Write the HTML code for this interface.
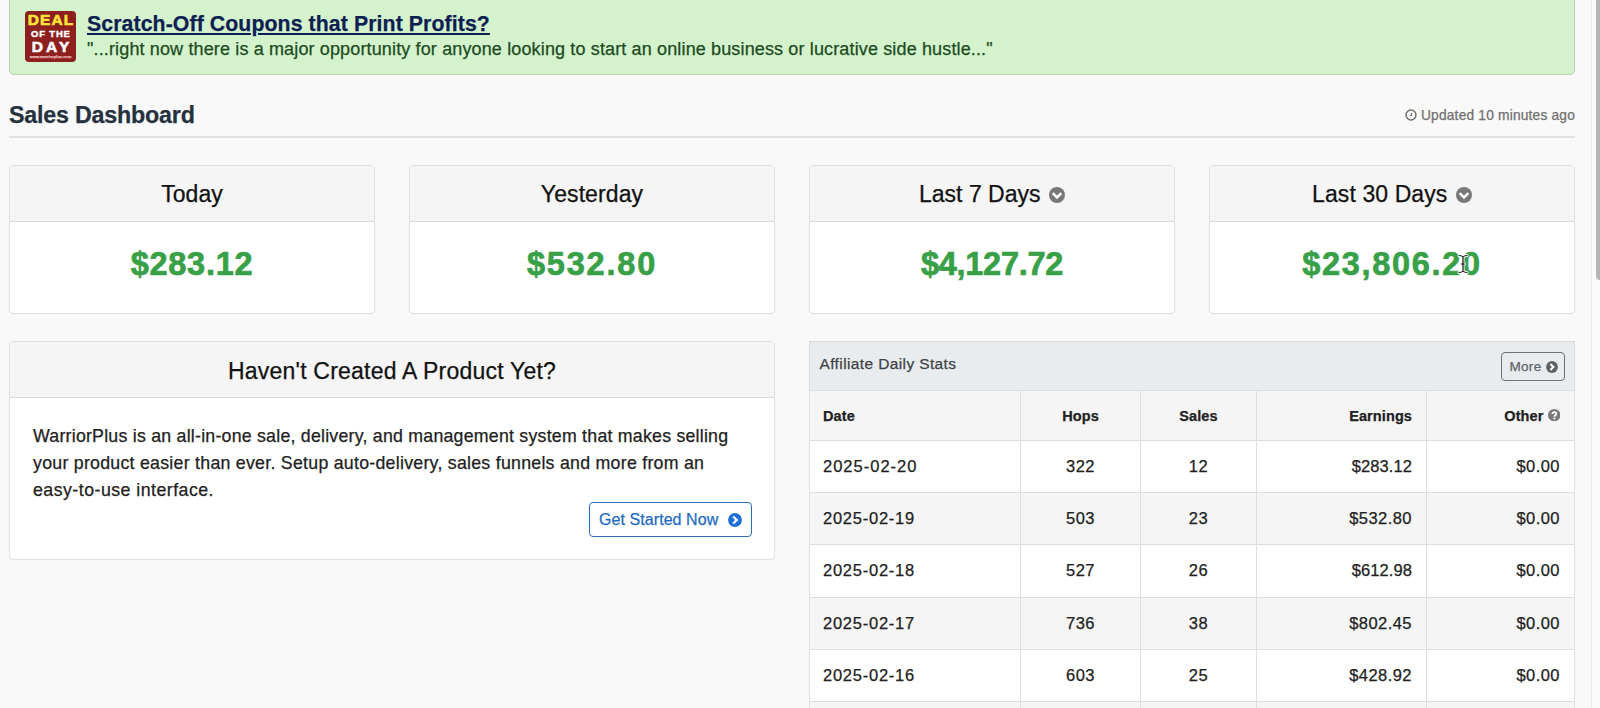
<!DOCTYPE html>
<html><head><meta charset="utf-8">
<style>
*{box-sizing:border-box;margin:0;padding:0}
html,body{width:1600px;height:708px;overflow:hidden}
body{background:#f9f9f9;font-family:"Liberation Sans",sans-serif;color:#212529;position:relative;-webkit-text-stroke-width:0.25px}
.abs{position:absolute}
.alert{left:9px;top:-12px;width:1566px;height:87px;background:#d4f3cc;border:1px solid #b8d2b1;border-radius:5px}
.badge{left:25px;top:11px;width:51px;height:51px;background:#8d1f1f;border-radius:4px;overflow:hidden}
.badge span{position:absolute;left:0;width:51px;text-align:center;font-weight:700;white-space:nowrap}
.hl{left:87px;top:11px;font-size:21.25px;font-weight:700;color:#0c1e52;letter-spacing:0.1px;text-decoration:underline;text-decoration-thickness:2px;text-underline-offset:1.5px;white-space:nowrap;line-height:26px}
.sub{left:87px;top:38px;font-size:18px;color:#1c4a1f;letter-spacing:0.14px;white-space:nowrap;line-height:22px}
.h2{left:9px;top:101px;font-size:23.25px;font-weight:700;color:#25313d;letter-spacing:-0.2px;white-space:nowrap;line-height:28px}
.upd{right:25px;top:106.5px;font-size:13.75px;color:#6f6f6f;letter-spacing:0.19px;white-space:nowrap;line-height:18px}
.hr{left:9px;top:136px;width:1566px;height:2px;background:#e2e2e2}
.card{background:#fff;border:1px solid #dfdfdf;border-radius:4px;overflow:hidden}
.card .hd{position:absolute;left:0;top:0;right:0;height:56px;background:#f5f5f5;border-bottom:1px solid #dddddd;text-align:center;font-size:23px;color:#111;line-height:56px;white-space:nowrap}
.card .amt{position:absolute;left:0;right:0;top:52px;height:92px;text-align:center;font-size:32.5px;font-weight:700;color:#38a047;line-height:92px;white-space:nowrap;-webkit-text-stroke:0.7px #38a047}
.ic{display:inline-block;vertical-align:middle;position:relative}

.pc{left:9px;top:341px;width:766px;height:219px}
.pc .hd{height:56px;line-height:58px;font-size:23px;letter-spacing:0.22px}
.ptxt{left:33px;top:423px;font-size:17.75px;color:#212121;letter-spacing:0.2px;line-height:26.9px;white-space:nowrap}
.btn{left:589px;top:502px;width:163px;height:35px;border:1.5px solid #2c6fb7;border-radius:4px;color:#1f6bbf;font-size:16px;letter-spacing:0.07px;line-height:33.5px;padding-left:9px;white-space:nowrap;background:#fff}
.panel{left:809px;top:341px;width:766px;height:400px;background:#fff;border:1px solid #dcdcdc}
.phd{position:absolute;left:0;top:0;right:0;height:49px;background:#e9ecee;border-bottom:1px solid #dadada}
.ptitle{position:absolute;left:9.5px;top:0;line-height:44px;font-size:15.5px;color:#3d4246;letter-spacing:0.38px;white-space:nowrap}
.more{position:absolute;left:691px;top:10px;width:64px;height:29px;border:1.6px solid #6e7276;border-radius:4px;color:#5f6468;font-size:13.5px;letter-spacing:0.3px;line-height:28px;padding-left:7.5px;white-space:nowrap}
table{position:absolute;left:-1px;top:48px;border-collapse:collapse;table-layout:fixed;width:765px}
td,th{border:1px solid #dedede;height:52.2px;font-size:16.5px;letter-spacing:0.45px;color:#212121;white-space:nowrap;padding:0 14px}
th{font-weight:700;font-size:14.5px;letter-spacing:0.1px;height:50px;background:#f5f5f5}
tr.s td{background:#f5f5f5}
.scr{left:1591px;top:0;width:9px;height:708px;background:#fafafa;border-left:1px solid #ececec}
.thumb{left:1596px;top:-10px;width:8px;height:290px;background:#b4b4b4;border-radius:4px}
</style></head><body>

<div class="abs alert"></div>
<div class="abs badge">
  <span style="top:0.2px;font-size:15.5px;color:#ffe53b;letter-spacing:1.1px;text-indent:1.1px;line-height:17px;-webkit-text-stroke:0.6px #ffe53b">DEAL</span>
  <span style="top:17px;font-size:9.5px;color:#fff;letter-spacing:0.8px;text-indent:0.8px;line-height:11px;-webkit-text-stroke:0.4px #fff">OF THE</span>
  <span style="top:27.2px;font-size:15.5px;color:#fff;letter-spacing:3.1px;text-indent:3.1px;line-height:17px;-webkit-text-stroke:0.6px #fff">DAY</span>
  <span style="top:44px;font-size:4px;color:#e9b3b3;line-height:4px">www.warriorplus.com</span>
</div>
<div class="abs hl">Scratch-Off Coupons that Print Profits?</div>
<div class="abs sub">"...right now there is a major opportunity for anyone looking to start an online business or lucrative side hustle..."</div>

<div class="abs h2">Sales Dashboard</div>
<div class="abs upd"><svg class="ic" width="12" height="12" viewBox="0 0 12 12" style="margin-right:3.5px;top:-1.3px;left:-0.4px"><circle cx="6" cy="6" r="4.95" fill="none" stroke="#6f6f6f" stroke-width="1.5"/><path d="M6.5 3.9V6.4H4.8" fill="none" stroke="#7a7a7a" stroke-width="1.2"/></svg>Updated 10 minutes ago</div>
<div class="abs hr"></div>

<!-- stat cards -->
<div class="abs card" style="left:9px;top:165px;width:366px;height:149px">
  <div class="hd">Today</div>
  <div class="amt" style="letter-spacing:0.7px">$283.12</div>
</div>
<div class="abs card" style="left:409px;top:165px;width:366px;height:149px">
  <div class="hd" style="letter-spacing:0.1px">Yesterday</div>
  <div class="amt" style="letter-spacing:1.8px">$532.80</div>
</div>
<div class="abs card" style="left:809px;top:165px;width:366px;height:149px">
  <div class="hd">Last 7 Days<svg class="ic" width="16" height="16" viewBox="0 0 16 16" style="margin-left:8.5px;top:-1px"><circle cx="8" cy="8" r="8" fill="#787878"/><path d="M3.7 6.2L8 10.5L12.3 6.2" fill="none" stroke="#fff" stroke-width="2.6"/></svg></div>
  <div class="amt" style="letter-spacing:-0.3px">$4,127.72</div>
</div>
<div class="abs card" style="left:1209px;top:165px;width:366px;height:149px">
  <div class="hd" style="letter-spacing:0.1px">Last 30 Days<svg class="ic" width="16" height="16" viewBox="0 0 16 16" style="margin-left:8.5px;top:-1px"><circle cx="8" cy="8" r="8" fill="#787878"/><path d="M3.7 6.2L8 10.5L12.3 6.2" fill="none" stroke="#fff" stroke-width="2.6"/></svg></div>
  <div class="amt" style="letter-spacing:1.7px">$23,806.20</div>
</div>


<!-- product card -->
<div class="abs card pc">
  <div class="hd">Haven't Created A Product Yet?</div>
</div>
<div class="abs ptxt"><span style="letter-spacing:0.23px">WarriorPlus is an all-in-one sale, delivery, and management system that makes selling</span><br><span style="letter-spacing:0.26px">your product easier than ever. Setup auto-delivery, sales funnels and more from an</span><br><span style="letter-spacing:0.47px">easy-to-use interface.</span></div>
<div class="abs btn">Get Started Now<svg class="ic" width="14" height="14" viewBox="0 0 14 14" style="margin-left:10px;top:-0.5px"><circle cx="7" cy="7" r="6.9" fill="#1c6fd6"/><path d="M5.2 3.5L8.7 7L5.2 10.5" fill="none" stroke="#fff" stroke-width="2.4"/></svg></div>

<!-- table panel -->
<div class="abs panel">
  <div class="phd"><div class="ptitle">Affiliate Daily Stats</div>
    <div class="more">More<svg class="ic" width="12" height="12" viewBox="0 0 12 12" style="margin-left:4.2px;top:-0.5px"><circle cx="6" cy="6" r="5.9" fill="#5c6064"/><path d="M4.4 3.1L7.4 6L4.4 8.9" fill="none" stroke="#fff" stroke-width="2.1"/></svg></div>
  </div>
  <table>
    <colgroup><col style="width:211px"><col style="width:120px"><col style="width:116px"><col style="width:170px"><col style="width:148px"></colgroup>
    <tr><th style="text-align:left;padding-left:13px">Date</th><th style="text-align:center">Hops</th><th style="text-align:center">Sales</th><th style="text-align:right">Earnings</th><th style="text-align:right">Other <svg class="ic" width="12.4" height="12.4" viewBox="0 0 12 12" style="top:-1.5px"><circle cx="6" cy="6" r="6" fill="#7a7a7a"/><path d="M4.2 4.9C4.2 3.7 5 3.1 6.1 3.1C7.2 3.1 8 3.8 8 4.8C8 6 6.2 6.1 6.2 7.4" fill="none" stroke="#fff" stroke-width="1.7"/><rect x="5.3" y="8.3" width="1.8" height="1.7" fill="#fff"/></svg></th></tr>
    <tr><td style="padding-left:13px;letter-spacing:1px">2025-02-20</td><td style="text-align:center">322</td><td style="text-align:center">12</td><td style="text-align:right;letter-spacing:0.1px">$283.12</td><td style="text-align:right">$0.00</td></tr>
    <tr class="s"><td style="padding-left:13px;letter-spacing:0.75px">2025-02-19</td><td style="text-align:center">503</td><td style="text-align:center">23</td><td style="text-align:right">$532.80</td><td style="text-align:right">$0.00</td></tr>
    <tr><td style="padding-left:13px;letter-spacing:0.75px">2025-02-18</td><td style="text-align:center">527</td><td style="text-align:center">26</td><td style="text-align:right;letter-spacing:0.1px">$612.98</td><td style="text-align:right">$0.00</td></tr>
    <tr class="s"><td style="padding-left:13px;letter-spacing:0.75px">2025-02-17</td><td style="text-align:center">736</td><td style="text-align:center">38</td><td style="text-align:right">$802.45</td><td style="text-align:right">$0.00</td></tr>
    <tr><td style="padding-left:13px;letter-spacing:0.75px">2025-02-16</td><td style="text-align:center">603</td><td style="text-align:center">25</td><td style="text-align:right">$428.92</td><td style="text-align:right">$0.00</td></tr>
    <tr class="s"><td style="padding-left:13px;letter-spacing:0.75px">2025-02-15</td><td style="text-align:center">0</td><td style="text-align:center">0</td><td style="text-align:right">$0.00</td><td style="text-align:right">$0.00</td></tr>
  </table>
</div>

<svg class="abs" style="left:1456.2px;top:253px" width="14" height="22" viewBox="0 0 14 22"><path d="M3 2.5C5 2.5 6.2 3 7 4C7.8 3 9 2.5 11 2.5M7 4V18M3 19.5C5 19.5 6.2 19 7 18C7.8 19 9 19.5 11 19.5M5.5 11H8.5" fill="none" stroke="#fff" stroke-width="3" stroke-linecap="round"/><path d="M3 2.5C5 2.5 6.2 3 7 4C7.8 3 9 2.5 11 2.5M7 4V18M3 19.5C5 19.5 6.2 19 7 18C7.8 19 9 19.5 11 19.5M5.5 11H8.5" fill="none" stroke="#111" stroke-width="1.2" stroke-linecap="round"/></svg>
<div class="abs scr"></div>
<div class="abs thumb"></div>
</body></html>
